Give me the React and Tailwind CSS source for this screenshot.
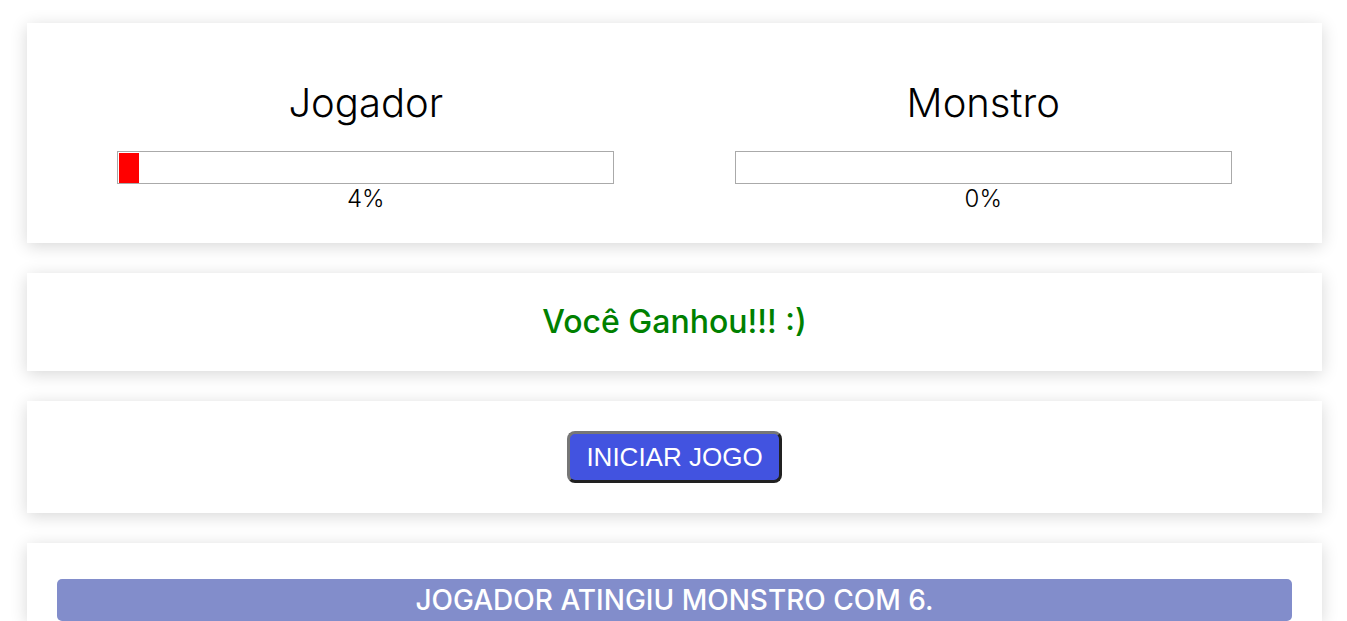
import React from "react";

const fighters = [
  { name: "Jogador", life: 4 },
  { name: "Monstro", life: 0 },
];

const logs = ["Jogador atingiu Monstro com 6."];

function Panel({ label, className, children }) {
  return (
    <section
      aria-label={label}
      className={`bg-white p-[30px] shadow-[0_3px_16px_rgba(0,0,0,0.16)] ${className}`}
    >
      {children}
    </section>
  );
}

function Fighter({ name, life }) {
  return (
    <div className="flex flex-1 flex-col items-center">
      <h2 className="text-[40px] leading-[48px] font-light">{name}</h2>
      <div
        role="progressbar"
        aria-label={name}
        aria-valuenow={life}
        aria-valuemin={0}
        aria-valuemax={100}
        className="mt-6 box-content h-[30px] w-4/5 border border-[#aaa] pt-px pl-px"
      >
        <div className="h-full bg-[red]" style={{ width: `${life}%` }} />
      </div>
      <div className="text-2xl leading-[29px] font-light">{life}%</div>
    </div>
  );
}

export default function App() {
  return (
    <main className="flex flex-col gap-[30px] bg-white pt-[23px] pr-[25px] pl-[27px] font-['Inter','Open_Sans',sans-serif] text-black">
      <Panel label="Placar" className="flex pt-[56px]">
        {fighters.map((f) => (
          <Fighter key={f.name} name={f.name} life={f.life} />
        ))}
      </Panel>
      <Panel label="Resultado" className="text-center">
        <p className="text-[32px] leading-[38px] font-medium text-[green]">
          Você Ganhou!!! :)
        </p>
      </Panel>
      <Panel label="Controles" className="flex justify-center">
        <button
          type="button"
          className="rounded-lg border-[3px] border-t-[#767676] border-r-[#212121] border-b-[#212121] border-l-[#767676] bg-[#4253e0] px-4 py-[7px] font-['Liberation_Sans',Arial,sans-serif] text-[26px] leading-8 text-white uppercase"
        >
          Iniciar Jogo
        </button>
      </Panel>
      <Panel label="Registro" className="pt-[36px] pb-0">
        <ul>
          {logs.map((text) => (
            <li
              key={text}
              className="rounded-[5px] bg-[#828dcb] py-1 text-center text-[28px] leading-[34px] font-medium text-white uppercase"
            >
              {text}
            </li>
          ))}
        </ul>
      </Panel>
    </main>
  );
}
